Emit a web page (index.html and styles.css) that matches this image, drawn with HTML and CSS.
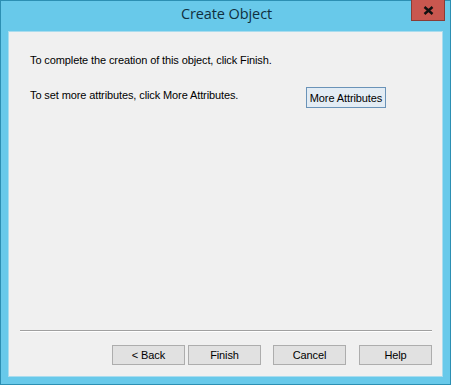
FILE: index.html
```html
<!DOCTYPE html>
<html>
<head>
<meta charset="utf-8">
<link rel="stylesheet" href="styles.css">
</head>
<body>
<div class="window">
  <div class="titlebar">
    <div class="spacer"></div>
    <div class="title">Create Object</div>
    <div class="close">
      <svg width="11" height="9" viewBox="0 0 11 9"><path d="M1.5 1 L9.5 8 M9.5 1 L1.5 8" stroke="#111" stroke-width="2.4" fill="none"/></svg>
    </div>
  </div>
  <div class="panel">
    <div class="body">
      <p class="line first">To complete the creation of this object, click Finish.</p>
      <div class="row">
        <p class="line">To set more attributes, click More Attributes.</p>
        <button class="btn more">More Attributes</button>
      </div>
    </div>
    <div class="footer">
      <hr class="sep">
      <div class="buttons">
        <button class="btn">&lt; Back</button>
        <button class="btn finish">Finish</button>
        <button class="btn cancel">Cancel</button>
        <button class="btn help">Help</button>
      </div>
    </div>
  </div>
</div>
</body>
</html>
```
FILE: styles.css
```css
html, body {
  margin: 0;
  padding: 0;
  background: #ffffff;
}
.window {
  box-sizing: border-box;
  width: 451px;
  height: 385px;
  background: #68c9ea;
  border: 1px solid #2c8fb3;
  display: flex;
  flex-direction: column;
  padding: 0 7px 7px 7px;
  font-family: "Liberation Sans", Arial, sans-serif;
}
.titlebar {
  height: 30px;
  display: grid;
  grid-template-columns: 1fr auto 1fr;
  align-items: start;
  margin-right: -2px;
}
.title {
  font-family: "Open Sans", "Noto Sans", sans-serif;
  font-size: 14.5px;
  color: #10303f;
  line-height: 30px;
  margin-top: -2px;
  letter-spacing: -0.1px;
}
.close {
  justify-self: end;
  box-sizing: border-box;
  width: 34px;
  height: 21px;
  margin-top: -1px;
  background: #c9574f;
  border: 1px solid #8a3c36;
  border-top: none;
  display: flex;
  align-items: center;
  justify-content: center;
}
.panel {
  flex: 1;
  background: #f0f0f0;
  border: 1px solid #a9dcee;
  display: flex;
  flex-direction: column;
  justify-content: space-between;
}
.body {
  padding: 22px 0 0 21px;
}
.line {
  margin: 0;
  font-size: 11px;
  color: #000;
  line-height: 13px;
  letter-spacing: -0.11px;
}
.row {
  display: flex;
  align-items: center;
  justify-content: space-between;
  margin-top: 20px;
  padding-right: 56px;
}
.row .line {
  margin-top: -4px;
}
.btn {
  box-sizing: border-box;
  height: 20px;
  width: 73px;
  padding: 0;
  background: #e1e1e1;
  border: 1px solid #adadad;
  border-radius: 0;
  font-family: "Liberation Sans", Arial, sans-serif;
  font-size: 11px;
  color: #000;
  letter-spacing: -0.1px;
}
.btn.more {
  width: 80px;
  height: 21px;
  background: #e3ecf4;
  border: 1px solid #6a93b8;
}
.footer {
  padding: 0 10px 11px 11px;
}
.sep {
  margin: 0 0 13px 0;
  border: none;
  border-top: 1px solid #a0a0a0;
  border-bottom: 1px solid #ffffff;
}
.buttons {
  display: flex;
  justify-content: flex-end;
}
.btn.finish { margin-left: 3px; }
.btn.cancel { margin-left: 12px; }
.btn.help { margin-left: 13px; }
```
